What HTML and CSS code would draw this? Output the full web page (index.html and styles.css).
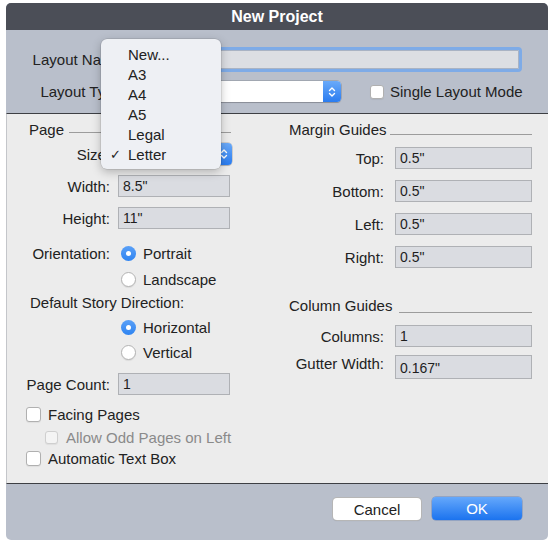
FILE: index.html
```html
<!DOCTYPE html>
<html>
<head>
<meta charset="utf-8">
<title>New Project</title>
<link rel="stylesheet" href="styles.css">
</head>
<body>
<div class="window">
  <div class="titlebar">New Project</div>
  <div class="top">
    <div class="trow trow-name">
      <div class="tlabel">Layout Name:</div>
      <div class="namefield"></div>
    </div>
    <div class="trow trow-type">
      <div class="tlabel">Layout Type:</div>
      <div class="popup popup-type">
        <span class="popup-text"></span>
        <span class="popup-btn"><svg width="8" height="12" viewBox="0 0 8 12"><path d="M1.5 4.5 L4 2 L6.5 4.5 M1.5 7.5 L4 10 L6.5 7.5" fill="none" stroke="#fff" stroke-width="1.4" stroke-linecap="round" stroke-linejoin="round"/></svg></span>
      </div>
      <div class="check check-single"><span class="cbox"></span><span>Single Layout Mode</span></div>
    </div>
  </div>

  <div class="panel">
    <div class="col col-left">
      <div class="grouphead head-page">Page</div>
      <div class="row fr mt5">
        <div class="lab">Size:</div>
        <div class="popup popup-size">
          <span class="popup-text"></span>
          <span class="popup-btn"><svg width="8" height="12" viewBox="0 0 8 12"><path d="M1.5 4.5 L4 2 L6.5 4.5 M1.5 7.5 L4 10 L6.5 7.5" fill="none" stroke="#fff" stroke-width="1.4" stroke-linecap="round" stroke-linejoin="round"/></svg></span>
        </div>
      </div>
      <div class="row fr mt10">
        <div class="lab">Width:</div>
        <div class="field">8.5"</div>
      </div>
      <div class="row fr mt10">
        <div class="lab">Height:</div>
        <div class="field">11"</div>
      </div>
      <div class="row rr mt16">
        <div class="lab">Orientation:</div>
        <span class="radio radio-on"></span><span>Portrait</span>
      </div>
      <div class="row rr mt10">
        <div class="lab"></div>
        <span class="radio radio-off"></span><span>Landscape</span>
      </div>
      <div class="row plain mt7">Default Story Direction:</div>
      <div class="row rr mt9">
        <div class="lab"></div>
        <span class="radio radio-on"></span><span>Horizontal</span>
      </div>
      <div class="row rr mt9">
        <div class="lab"></div>
        <span class="radio radio-off"></span><span>Vertical</span>
      </div>
      <div class="row fr mt13">
        <div class="lab">Page Count:</div>
        <div class="field">1</div>
      </div>
      <div class="row check mt11"><span class="cbox"></span><span>Facing Pages</span></div>
      <div class="row check check-sub mt7"><span class="cbox cbox-dis"></span><span class="dis">Allow Odd Pages on Left</span></div>
      <div class="row check mt5"><span class="cbox"></span><span>Automatic Text Box</span></div>
    </div>

    <div class="col col-right">
      <div class="grouphead head-margin">Margin Guides</div>
      <div class="row fr mt9">
        <div class="lab">Top:</div>
        <div class="field">0.5"</div>
      </div>
      <div class="row fr mt11">
        <div class="lab">Bottom:</div>
        <div class="field">0.5"</div>
      </div>
      <div class="row fr mt11">
        <div class="lab">Left:</div>
        <div class="field">0.5"</div>
      </div>
      <div class="row fr mt11">
        <div class="lab">Right:</div>
        <div class="field">0.5"</div>
      </div>
      <div class="grouphead head-column">Column Guides</div>
      <div class="row fr mt11">
        <div class="lab">Columns:</div>
        <div class="field">1</div>
      </div>
      <div class="row fr fr-tall mt8">
        <div class="lab lab-up">Gutter Width:</div>
        <div class="field field-tall">0.167"</div>
      </div>
    </div>
  </div>

  <div class="footer">
    <button class="btn btn-cancel">Cancel</button>
    <button class="btn btn-ok">OK</button>
  </div>

  <div class="menu">
    <div class="menu-item">New...</div>
    <div class="menu-item">A3</div>
    <div class="menu-item">A4</div>
    <div class="menu-item">A5</div>
    <div class="menu-item">Legal</div>
    <div class="menu-item checked">Letter</div>
  </div>
</div>
</body>
</html>
```

FILE: styles.css
```css
body {
  margin: 0;
  background: #ffffff;
  font-family: "Liberation Sans", Arial, sans-serif;
  font-size: 15px;
  color: #222222;
}

.window {
  position: relative;
  margin: 3px 0 0 6px;
  width: 542px;
  height: 537px;
  border-radius: 5px;
  overflow: hidden;
  background: #b9bfcb;
  display: flex;
  flex-direction: column;
}

.titlebar {
  height: 27px;
  flex: none;
  background: #4b4e57;
  color: #ffffff;
  font-weight: bold;
  font-size: 16px;
  display: flex;
  align-items: center;
  justify-content: center;
}

/* top area */
.top {
  height: 83px;
  flex: none;
  box-sizing: border-box;
  padding-top: 17px;
}

.trow {
  display: flex;
  align-items: center;
  gap: 7px;
}

.tlabel {
  width: 120px;
  flex: none;
  text-align: right;
}

.trow-name {
  height: 25px;
}

.namefield {
  width: 389px;
  height: 25px;
  box-sizing: border-box;
  border: 3px solid #7eabe7;
  border-radius: 4px;
  background: #dcdee3;
  box-shadow: inset 0 0 0 1px #a9b3c4;
}

.trow-type {
  margin-top: 9px;
  height: 21px;
}

.popup {
  display: flex;
  background: #ffffff;
  border-radius: 4px;
  overflow: hidden;
  box-shadow: 0 0 0 0.5px rgba(0, 0, 0, 0.25), 0 1px 1px rgba(0, 0, 0, 0.15);
}

.popup-type {
  width: 208px;
  height: 21px;
}

.popup-size {
  width: 114px;
  height: 22px;
}

.popup-text {
  flex: 1;
}

.popup-btn {
  width: 18px;
  flex: none;
  background: linear-gradient(#6aaaf9, #2a7cf0);
  display: flex;
  align-items: center;
  justify-content: center;
}

.popup-size .popup-btn {
  width: 16px;
}

.check {
  display: flex;
  align-items: center;
  gap: 7px;
}

.check-single {
  margin-left: 22px;
  gap: 6px;
}

.cbox {
  width: 14px;
  height: 14px;
  flex: none;
  box-sizing: border-box;
  background: #ffffff;
  border: 1px solid #b0b0b0;
  border-radius: 3px;
  box-shadow: 0 1px 1px rgba(0, 0, 0, 0.06);
}

.col .cbox {
  width: 15px;
  height: 15px;
}

.col .cbox.cbox-dis {
  width: 13px;
  height: 13px;
  background: #f4f4f4;
  border-color: #cfcfcf;
}

.dis {
  color: #8a8a8a;
}

/* panel */
.panel {
  height: 369px;
  flex: none;
  background: #ececec;
  border-top: 1px solid #3d3f44;
  border-bottom: 1px solid #3d3f44;
  border-left: 1px solid #c4c6ca;
  display: flex;
}

.col {
  display: flex;
  flex-direction: column;
}

.col-left {
  width: 273px;
  flex: none;
}

.col-right {
  flex: 1;
}

.grouphead {
  display: flex;
  align-items: center;
  height: 18px;
  flex: none;
}

.grouphead::after {
  content: "";
  flex: 1;
  height: 0;
  border-bottom: 1px solid #9c9c9c;
  align-self: flex-end;
}

.head-page {
  margin: 6px 49px 0 22px;
}

.head-page::after {
  margin: 0 0 5px 5px;
}

.head-margin {
  margin: 6px 16px 0 9px;
}

.head-margin::after {
  margin: 0 0 3px 3px;
}

.head-column {
  margin: 28px 16px 0 9px;
}

.head-column::after {
  margin: 0 0 1px 7px;
}

.row {
  display: flex;
  align-items: center;
  flex: none;
}

.fr {
  height: 22px;
}

.fr-tall {
  height: 24px;
}

.rr {
  height: 16px;
}

.lab {
  width: 103px;
  flex: none;
  text-align: right;
}

.col-right .lab {
  width: 104px;
}

.lab-up {
  align-self: flex-start;
  line-height: 18px;
}

.col-left .fr .lab {
  margin-right: 8px;
}

.col-right .fr .lab {
  margin-right: 11px;
}

.field {
  width: 112px;
  height: 22px;
  box-sizing: border-box;
  border: 1px solid #afb1b5;
  background: #dadce1;
  font-size: 14px;
  line-height: 20px;
  padding-left: 4px;
  color: #1e1e1e;
}

.col-right .field {
  width: 137px;
}

.field-tall {
  height: 24px;
  line-height: 24px;
}

.rr .lab {
  margin-right: 11px;
}

.radio {
  width: 15px;
  height: 15px;
  flex: none;
  box-sizing: border-box;
  border-radius: 50%;
  margin-right: 7px;
}

.radio-on {
  background: linear-gradient(#5aa0f7, #2f84f1);
  display: flex;
  align-items: center;
  justify-content: center;
}

.radio-on::after {
  content: "";
  width: 5px;
  height: 5px;
  border-radius: 50%;
  background: #ffffff;
}

.radio-off {
  background: #ffffff;
  border: 1px solid #b3b3b3;
  box-shadow: 0 1px 1px rgba(0, 0, 0, 0.08);
}

.plain {
  height: 16px;
  padding-left: 23px;
}

.col-left .check {
  height: 16px;
  padding-left: 19px;
}

.col-left .check.check-sub {
  padding-left: 38px;
  gap: 8px;
}

.mt5 { margin-top: 5px; }
.mt7 { margin-top: 7px; }
.mt8 { margin-top: 8px; }
.mt9 { margin-top: 9px; }
.mt10 { margin-top: 10px; }
.mt11 { margin-top: 11px; }
.mt13 { margin-top: 13px; }
.mt16 { margin-top: 16px; }

/* footer */
.footer {
  flex: 1;
  display: flex;
  justify-content: flex-end;
  align-items: flex-start;
  gap: 11px;
  padding: 14px 26px 0 0;
}

.btn {
  height: 22px;
  border: none;
  border-radius: 4px;
  font-family: "Liberation Sans", Arial, sans-serif;
  font-size: 15px;
  padding: 0;
}

.btn-cancel {
  width: 88px;
  background: #ffffff;
  color: #222222;
  box-shadow: 0 0 0 1px #b6b6b6, 0 1px 1px rgba(0, 0, 0, 0.15);
}

.btn-ok {
  width: 90px;
  height: 23px;
  margin-top: -1px;
  background: linear-gradient(#65a8fb, #1b73ef);
  color: #ffffff;
  box-shadow: 0 0 0 0.5px rgba(0, 60, 160, 0.4);
}

/* dropdown menu */
.menu {
  position: absolute;
  z-index: 10;
  left: 95px;
  top: 36px;
  width: 120px;
  height: 130px;
  box-sizing: border-box;
  padding: 6px 0 5px;
  background: #eef0f4;
  border-radius: 6px;
  box-shadow: 0 0 0 0.5px rgba(0, 0, 0, 0.15), 0 3px 10px rgba(0, 0, 0, 0.25);
}

.menu-item {
  position: relative;
  height: 20px;
  line-height: 20px;
  padding-left: 27px;
  color: #222222;
}

.menu-item.checked::before {
  content: "\2713";
  position: absolute;
  left: 9px;
  top: 0;
  font-family: "DejaVu Sans", sans-serif;
  font-size: 13px;
}
```
